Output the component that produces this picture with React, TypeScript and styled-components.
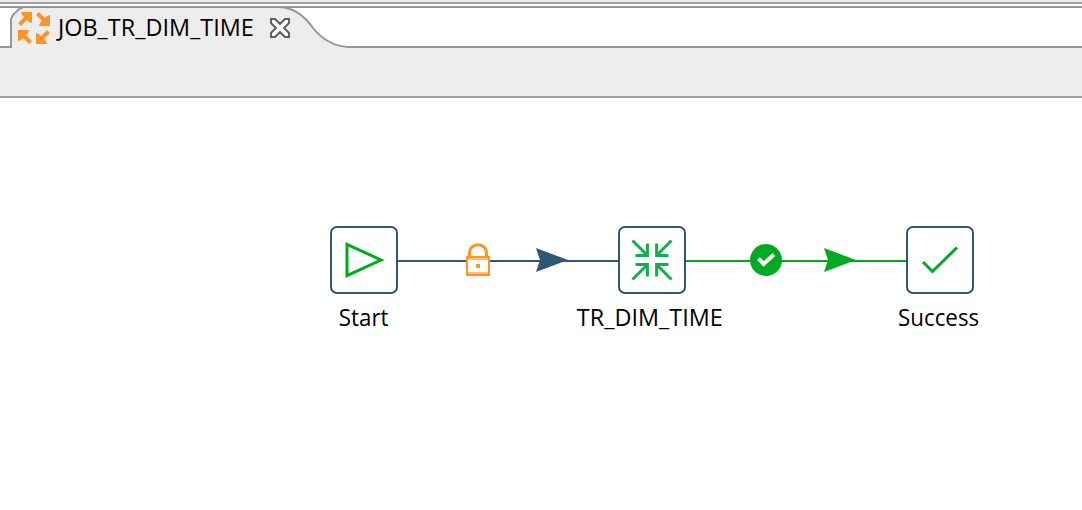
import React from "react";
import styled, { createGlobalStyle } from "styled-components";

const GlobalStyle = createGlobalStyle`
  body { margin: 0; background: #fff; overflow: hidden; }
  * { box-sizing: border-box; }
`;

const Window = styled.div`
  width: 1082px;
  height: 510px;
  display: flex;
  flex-direction: column;
  background: #fff;
  font-family: "Open Sans", "Noto Sans", sans-serif;
  color: #000;
`;

const TopEdge = styled.div`
  flex: none;
  height: 6px;
  background: linear-gradient(#ededed 0 2px, #9b9fa6 2px 4px, #fff 4px 6px);
`;

const TabBar = styled.div`
  flex: none;
  display: flex;
  height: 42px;
  border-top: 2px solid #969696;
`;

const BarGap = styled.div<{ $grow?: boolean }>`
  width: 10px;
  ${(p) => p.$grow && "flex: 1; width: auto;"}
  border-bottom: 2px solid #969696;
`;

const Tab = styled.div`
  position: relative;
  width: 338px;
  margin-top: -2px;
  display: flex;
  align-items: center;
`;

const TabShape = styled.svg`
  position: absolute;
  inset: 0;
`;

const TabIcon = styled.svg`
  position: relative;
  flex: none;
  margin: 2px 8px 0 8px;
`;

const TabTitle = styled.div`
  position: relative;
  width: 197px;
  font-size: 24px;
  line-height: 40px;
  white-space: nowrap;
`;

const Squeeze = styled.span<{ $x: number; $center?: boolean }>`
  display: inline-block;
  transform: scaleX(${(p) => p.$x});
  transform-origin: ${(p) => (p.$center ? "center" : "left")};
`;

const CloseIcon = styled.svg`
  position: relative;
  flex: none;
  margin: 2px 0 0 15px;
`;

const Toolbar = styled.div`
  flex: none;
  height: 50px;
  background: #ededed;
  border-bottom: 2px solid #9b9fa6;
`;

const Canvas = styled.div`
  position: relative;
  flex: 1;
`;

const Node = styled.div<{ $x: number }>`
  position: absolute;
  left: ${(p) => p.$x - 66}px;
  top: 128px;
  width: 200px;
  display: flex;
  flex-direction: column;
  align-items: center;
`;

const NodeBox = styled.div`
  width: 68px;
  height: 68px;
  border: 2px solid #2f5876;
  border-radius: 7px;
  background: #fff;
`;

const NodeLabel = styled.div<{ $inset?: number }>`
  margin-top: 6px;
  padding-right: ${(p) => p.$inset ?? 3}px;
  font-size: 24px;
  line-height: 34px;
  white-space: nowrap;
`;

const Hops = styled.svg`
  position: absolute;
  left: 0;
  top: 128px;
`;

const QUARTERS = [[1, 1], [-1, 1], [1, -1], [-1, -1]];

export default function App() {
  return (
    <Window>
      <GlobalStyle />
      <TopEdge />
      <TabBar>
        <BarGap />
        <Tab>
          <TabShape width="338" height="42" viewBox="10 6 338 42">
            <path d="M0 0H348V48H280Z" fill="none" />
            <path d="M11 48V19L13 15L19 9L23 7H280C296 8 306 18 313 28C321 38 332 46 348 47V48Z" fill="#ededed" />
            <path d="M11 48V19L13 15L19 9L23 7H280C296 8 306 18 313 28C321 38 332 46 348 47" fill="none" stroke="#969696" strokeWidth="2" />
          </TabShape>
          <TabIcon width="32" height="32" viewBox="0 0 32 32">
            <g fill="#ff9326" stroke="#ff9326">
              <path d="M1.500 12.500L10 4M19.500 1.500L28 10M30.500 19.500L22 28M12.500 30.500L4 22" strokeWidth="4" />
              <path d="M3 0H14V11L11 10L4 3ZM32 3V14H21L22 11L29 4ZM18 21V32H29L28 29L21 22ZM11 18H0V29L3 28L10 21Z" stroke="none" />
            </g>
          </TabIcon>
          <TabTitle><Squeeze $x={0.975}>JOB_TR_DIM_TIME</Squeeze></TabTitle>
          <CloseIcon width="20" height="20" viewBox="0 0 20 20">
            <path d="M1 1H5L10 6L15 1H19V5L14 10L19 15V19H15L10 14L5 19H1V15L6 10L1 5Z" fill="#fff" stroke="#606060" strokeWidth="2" />
          </CloseIcon>
        </Tab>
        <BarGap $grow />
      </TabBar>
      <Toolbar />
      <Canvas>
        <Hops width="1082" height="68" viewBox="0 226 1082 68">
          <path d="M398 261H618" stroke="#2f5876" strokeWidth="2" />
          <path d="M686 261H906" stroke="#00ab23" strokeWidth="2" />
          <path d="M536 248L568 260L536 272L540 260Z" fill="#2f5876" />
          <path d="M824 248L856 260L824 272L828 260Z" fill="#00ab23" />
          <path d="M469.500 257V253C469.500 242 486.500 242 486.500 253V257" fill="none" stroke="#ff9326" strokeWidth="3" />
          <path d="M467 257H489V275H467Z" fill="#fff" stroke="#ff9326" strokeWidth="2" />
          <path d="M468 259H488M468 273H488" stroke="#ffc07d" strokeWidth="2" />
          <path d="M476 264H480V268H476Z" fill="#ff9326" />
          <circle cx="766" cy="260" r="16" fill="#00ab23" />
          <path d="M758.500 258.500L763.500 264L774 254.500" fill="none" stroke="#fff" strokeWidth="4" />
        </Hops>
        <Node $x={330}>
          <NodeBox>
            <svg width="64" height="64" viewBox="332 228 64 64">
              <path d="M347 244.300V275.700L381 260Z" fill="none" stroke="#00ab23" strokeWidth="3" />
            </svg>
          </NodeBox>
          <NodeLabel $inset={1}><Squeeze $x={0.93} $center>Start</Squeeze></NodeLabel>
        </Node>
        <Node $x={618}>
          <NodeBox>
            <svg width="64" height="64" viewBox="-32 -32 64 64">
              {QUARTERS.map(([x, y]) => (
                <path key={`${x}${y}`} transform={`scale(${x} ${y})`} d="M-19.500 -19.500L-5 -5M-16.500 -4.600H-4.600V-16.500" fill="none" stroke="#12b04c" strokeWidth="3" />
              ))}
            </svg>
          </NodeBox>
          <NodeLabel $inset={4}><Squeeze $x={0.975} $center>TR_DIM_TIME</Squeeze></NodeLabel>
        </Node>
        <Node $x={906}>
          <NodeBox>
            <svg width="64" height="64" viewBox="908 228 64 64">
              <path d="M923 262L932.500 271.500L957 247.500" fill="none" stroke="#00ab23" strokeWidth="3" />
            </svg>
          </NodeBox>
          <NodeLabel><Squeeze $x={0.93} $center>Success</Squeeze></NodeLabel>
        </Node>
      </Canvas>
    </Window>
  );
}
